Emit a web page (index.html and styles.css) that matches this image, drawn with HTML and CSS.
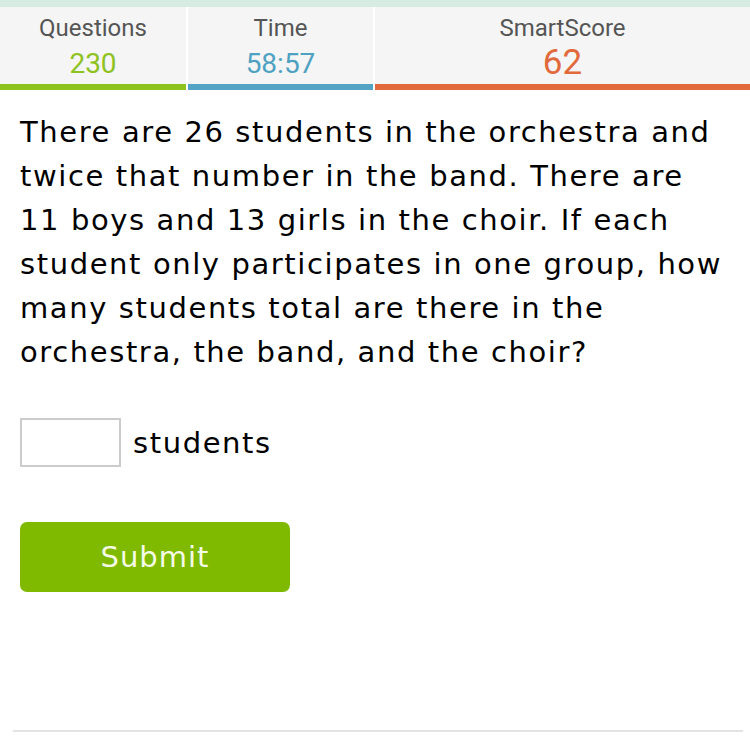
FILE: index.html
```html
<!DOCTYPE html>
<html>
<head>
<meta charset="utf-8">
<link rel="stylesheet" href="styles.css">
</head>
<body>
<div class="topstrip"></div>
<div class="stats">
  <div class="stat stat-q">
    <div class="label">Questions</div>
    <div class="value">230</div>
  </div>
  <div class="stat stat-t">
    <div class="label">Time</div>
    <div class="value">58:57</div>
  </div>
  <div class="stat stat-s">
    <div class="label">SmartScore</div>
    <div class="value big">62</div>
  </div>
</div>
<main class="content">
  <p class="question">There are 26 students in the orchestra and twice that number in the band. There are 11 boys and 13 girls in the choir. If each student only participates in one group, how many students total are there in the orchestra, the band, and the choir?</p>
  <div class="answer">
    <input class="box" type="text">
    <span class="unit">students</span>
  </div>
  <button class="submit">Submit</button>
</main>
<div class="divider"></div>
</body>
</html>
```
FILE: styles.css
```css
html, body {
  margin: 0;
  padding: 0;
  background: #fff;
  width: 750px;
  height: 750px;
  overflow: hidden;
}
body {
  font-family: "DejaVu Sans", Verdana, sans-serif;
  color: #000;
}
.topstrip {
  height: 7px;
  background: #d6ece0;
}
.stats {
  display: flex;
  gap: 2px;
  height: 83px;
  background: #fff;
}
.stat {
  background: #f5f5f5;
  display: flex;
  flex-direction: column;
  align-items: center;
  font-family: Roboto, "Open Sans", sans-serif;
  border-bottom: 6px solid;
  box-sizing: border-box;
  padding-top: 7px;
}
.stat-q { width: 186px; border-bottom-color: #8dc21f; }
.stat-t { width: 185px; border-bottom-color: #53a3c4; }
.stat-s { flex: 1; border-bottom-color: #e2693c; }
.label {
  font-size: 24px;
  line-height: 28px;
  color: #555;
}
.value {
  font-size: 28px;
  line-height: 32px;
  margin-top: 6px;
}
.stat-q .value { color: #8dc21f; }
.stat-t .value { color: #4fa1c2; }
.stat-s .value { color: #e2693c; font-size: 35px; margin-top: 5px; }
.content {
  padding: 20px 20px 0 20px;
}
.question {
  margin: 0;
  font-size: 29px;
  line-height: 44px;
  letter-spacing: 1.6px;
}
.answer {
  display: flex;
  align-items: center;
  margin-top: 44px;
  gap: 12px;
}
.box {
  width: 101px;
  height: 49px;
  box-sizing: border-box;
  border: 2px solid #cccccc;
  margin: 0;
  padding: 0;
  background: #fff;
}
.unit {
  font-size: 29px;
  letter-spacing: 1.6px;
}
.submit {
  margin-top: 55px;
  width: 270px;
  height: 70px;
  background: #7fba00;
  color: #f4fae6;
  border: none;
  border-radius: 7px;
  font-family: "DejaVu Sans", Verdana, sans-serif;
  font-size: 29px;
  letter-spacing: 1px;
  padding: 0;
  display: block;
}
.divider {
  margin: 138px 7px 0 13px;
  height: 2px;
  background: #e3e3e3;
}
```
